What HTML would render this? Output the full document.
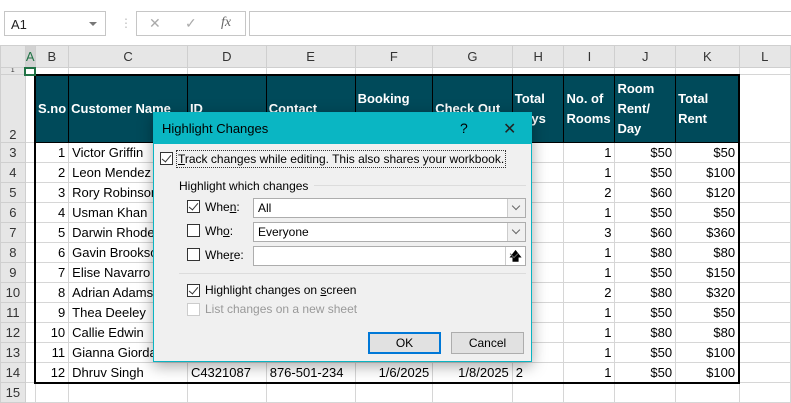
<!DOCTYPE html>
<html><head><meta charset="utf-8"><style>
*{box-sizing:border-box;margin:0;padding:0}
body{width:791px;height:400px;overflow:hidden;background:#fff;font-family:"Liberation Sans",sans-serif;position:relative}
.top{position:absolute;left:0;top:0;width:791px;height:45px;background:#fff}
.nb{position:absolute;left:4px;top:11px;width:102px;height:25px;border:1px solid #c6c6c6;font-size:13px;color:#222;padding:5px 6px}
.nb span{position:absolute;right:8px;top:10px;border-left:4px solid transparent;border-right:4px solid transparent;border-top:4px solid #777}
.fx{position:absolute;left:136px;top:11px;width:110px;height:25px;border:1px solid #c6c6c6;color:#aaa;font-size:14px}
.fb{position:absolute;left:249px;top:11px;width:545px;height:25px;border:1px solid #c6c6c6}
table.g{position:absolute;left:0;top:45px;border-collapse:collapse;table-layout:fixed;font-size:13px}
table.g td{border:1px solid #d6d6d6;height:20px;padding:0 3px;white-space:nowrap;overflow:hidden;color:#000}
table.g tr.ch td{background:#e6e6e6;text-align:center;color:#333;height:22px;border-color:#cfcfcf}
table.g td.rh{background:#e6e6e6;text-align:center;color:#333;border-color:#cfcfcf;padding:0}
table.g tr.r1 td{height:7px}
table.g tr.r2 td{height:68px}
table.g tr.r2 td.h{background:#004a5a;color:#fff;font-weight:bold;border:1px solid #000;border-top:2px solid #000;line-height:20px;white-space:normal;padding:0 2px}
table.g tr.r2 td.h.f{border-left:2px solid #000}
table.g tr.r2 td.h.l{border-right:2px solid #000}
.r{text-align:right}
.tb td.b{border-left:2px solid #000}
.tb td.k{border-right:2px solid #000}
.last td.in{border-bottom:2px solid #000}
.dlg{position:absolute;left:153px;top:112px;width:379px;height:250px;background:#f0f0f0;border:1px solid #0ab4c2;box-shadow:0 4px 14px rgba(0,0,0,.35);font-size:12px;color:#000}
.tt{height:31px;background:#0ab6c3;position:relative;font-size:13px;padding:8px 8px}
.cb{position:absolute;width:13px;height:13px;border:1px solid #333;background:#fff}
.cb.on::after{content:"";position:absolute;left:3px;top:0px;width:4px;height:8px;border:solid #333;border-width:0 1.5px 1.5px 0;transform:rotate(40deg)}
.a{position:absolute}
.dd{position:absolute;left:99px;width:273px;height:20px;border:1px solid #adadad;background:#fff;padding:2px 4px}
.dd i{position:absolute;right:0;top:0;width:18px;height:18px;background:#f0f0f0;border-left:1px solid #ccc}
.dd i::after{content:"";position:absolute;left:5px;top:4px;width:5px;height:5px;border:solid #666;border-width:0 1px 1px 0;transform:rotate(45deg)}
.btn{position:absolute;top:219px;height:22px;width:73px;border:1px solid #adadad;background:#e1e1e1;text-align:center;line-height:20px}
</style></head><body>
<div class="top">
<div class="nb">A1<span></span></div>
<div style="position:absolute;left:120px;top:16px;color:#bbb;font-size:12px">⋮</div>
<div class="fx"><span style="position:absolute;left:12px;top:3px">✕</span><span style="position:absolute;left:48px;top:3px">✓</span><span style="position:absolute;left:84px;top:3px;font-style:italic;font-family:'Liberation Serif',serif;color:#666">fx</span></div>
<div class="fb"></div>
</div>
<table class="g">
<colgroup><col style="width:25px"><col style="width:9px"><col style="width:32px"><col style="width:119px"><col style="width:79px"><col style="width:89px"><col style="width:78px"><col style="width:80px"><col style="width:52px"><col style="width:51px"><col style="width:61px"><col style="width:64px"><col style="width:52px"></colgroup>
<tr class="ch"><td style="background:#e6e6e6"></td><td style="color:#217346;padding:0;background:#d2d2d2;border-bottom:2px solid #217346">A</td><td>B</td><td>C</td><td>D</td><td>E</td><td>F</td><td>G</td><td>H</td><td>I</td><td>J</td><td>K</td><td>L</td></tr>
<tr class="r1"><td class="rh" style="font-size:7px;line-height:6px">1</td><td style="border:2px solid #217346"></td><td></td><td></td><td></td><td></td><td></td><td></td><td></td><td></td><td></td><td></td><td></td></tr>
<tr class="r2"><td class="rh" style="vertical-align:bottom">2</td><td></td><td class="h f">S.no</td><td class="h">Customer Name</td><td class="h">ID</td><td class="h">Contact</td><td class="h">Booking Date</td><td class="h">Check Out</td><td class="h">Total Days</td><td class="h">No. of Rooms</td><td class="h">Room Rent/ Day</td><td class="h l">Total Rent</td><td></td></tr>
<tbody class="tb">
<tr><td class="rh">3</td><td></td><td class="b r">1</td><td>Victor Griffin</td><td></td><td></td><td></td><td></td><td></td><td class="r">1</td><td class="r">$50</td><td class="k r">$50</td><td></td></tr>
<tr><td class="rh">4</td><td></td><td class="b r">2</td><td>Leon Mendez</td><td></td><td></td><td></td><td></td><td></td><td class="r">1</td><td class="r">$50</td><td class="k r">$100</td><td></td></tr>
<tr><td class="rh">5</td><td></td><td class="b r">3</td><td>Rory Robinson</td><td></td><td></td><td></td><td></td><td></td><td class="r">2</td><td class="r">$60</td><td class="k r">$120</td><td></td></tr>
<tr><td class="rh">6</td><td></td><td class="b r">4</td><td>Usman Khan</td><td></td><td></td><td></td><td></td><td></td><td class="r">1</td><td class="r">$50</td><td class="k r">$50</td><td></td></tr>
<tr><td class="rh">7</td><td></td><td class="b r">5</td><td>Darwin Rhodes</td><td></td><td></td><td></td><td></td><td></td><td class="r">3</td><td class="r">$60</td><td class="k r">$360</td><td></td></tr>
<tr><td class="rh">8</td><td></td><td class="b r">6</td><td>Gavin Brookson</td><td></td><td></td><td></td><td></td><td></td><td class="r">1</td><td class="r">$80</td><td class="k r">$80</td><td></td></tr>
<tr><td class="rh">9</td><td></td><td class="b r">7</td><td>Elise Navarro</td><td></td><td></td><td></td><td></td><td></td><td class="r">1</td><td class="r">$50</td><td class="k r">$150</td><td></td></tr>
<tr><td class="rh">10</td><td></td><td class="b r">8</td><td>Adrian Adams</td><td></td><td></td><td></td><td></td><td></td><td class="r">2</td><td class="r">$80</td><td class="k r">$320</td><td></td></tr>
<tr><td class="rh">11</td><td></td><td class="b r">9</td><td>Thea Deeley</td><td></td><td></td><td></td><td></td><td></td><td class="r">1</td><td class="r">$50</td><td class="k r">$50</td><td></td></tr>
<tr><td class="rh">12</td><td></td><td class="b r">10</td><td>Callie Edwin</td><td></td><td></td><td></td><td></td><td></td><td class="r">1</td><td class="r">$80</td><td class="k r">$80</td><td></td></tr>
<tr><td class="rh">13</td><td></td><td class="b r">11</td><td>Gianna Giordano</td><td></td><td></td><td></td><td></td><td></td><td class="r">1</td><td class="r">$50</td><td class="k r">$100</td><td></td></tr>
<tr class="last"><td class="rh">14</td><td></td><td class="b r in">12</td><td class="in">Dhruv Singh</td><td class="in">C4321087</td><td class="in">876-501-234</td><td class="in r">1/6/2025</td><td class="in r">1/8/2025</td><td class="in">2</td><td class="in r">1</td><td class="in r">$50</td><td class="in k r">$100</td><td></td></tr>
</tbody>
<tr><td class="rh">15</td><td></td><td></td><td></td><td></td><td></td><td></td><td></td><td></td><td></td><td></td><td></td><td></td></tr>
</table>
<div class="dlg">
<div class="tt">Highlight Changes<span class="a" style="left:306px;top:7px;font-size:14px">?</span><span class="a" style="left:349px;top:6px;font-size:16px;font-weight:300;color:#222">✕</span></div>
<div class="cb on" style="left:6px;top:39px"></div>
<div class="a" style="left:22px;top:37px;border:1px dotted #333;padding:1px 1px;white-space:nowrap"><u>T</u>rack changes while editing. This also shares your workbook.</div>
<div class="a" style="left:25px;top:66px">Highlight which changes</div>
<div class="a" style="left:160px;top:72px;width:212px;border-top:1px solid #dcdcdc"></div>
<div class="cb on" style="left:33px;top:87px"></div><div class="a" style="left:51px;top:87px">Whe<u>n</u>:</div>
<div class="dd" style="top:85px">All<i></i></div>
<div class="cb" style="left:33px;top:111px"></div><div class="a" style="left:51px;top:111px">Wh<u>o</u>:</div>
<div class="dd" style="top:109px">Everyone<i></i></div>
<div class="cb" style="left:33px;top:135px"></div><div class="a" style="left:51px;top:135px">Whe<u>r</u>e:</div>
<div class="dd" style="top:133px"><i style="background:#fff;width:20px;text-align:center;font-style:normal;font-weight:bold;font-size:12px;line-height:18px">🡅</i></div>
<div class="a" style="left:25px;top:160px;width:347px;border-top:1px solid #dcdcdc"></div>
<div class="cb on" style="left:33px;top:171px"></div><div class="a" style="left:51px;top:170px">Highlight changes on <u>s</u>creen</div>
<div class="cb" style="left:33px;top:190px;border-color:#ccc"></div><div class="a" style="left:51px;top:189px;color:#999">List changes on a new sheet</div>
<div class="btn" style="left:214px;border:2px solid #0078d7;line-height:18px">OK</div>
<div class="btn" style="left:297px">Cancel</div>
</div>
</body></html>
